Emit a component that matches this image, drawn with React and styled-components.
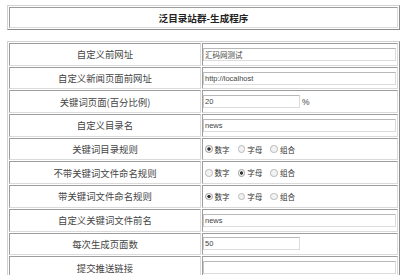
import { Fragment } from 'react';
import styled, { createGlobalStyle } from 'styled-components';

const GlobalStyle = createGlobalStyle`
  html, body {
    margin: 0;
    padding: 0;
    background: #fff;
  }
  body {
    font-family: "Noto Sans CJK SC", "Liberation Sans", sans-serif;
    color: #333;
  }
`;

const Page = styled.div`
  width: 393px;
  padding: 5px 0 0 7px;
`;

const Frame = styled.div`
  box-sizing: border-box;
  width: 393px;
  border: 1px solid;
  border-color: #d2d2d2 #8c8c8c #8c8c8c #d2d2d2;
  padding: 1px;
  display: grid;
  grid-template-columns: ${(p) => p.$cols || '1fr'};
  gap: 1px;
  margin-bottom: ${(p) => p.$mb || 0}px;
`;

const Cell = styled.div`
  box-sizing: border-box;
  height: ${(p) => p.$h}px;
  border: 1px solid;
  border-color: #9c9c9c #dadada #dadada #9c9c9c;
  display: flex;
  align-items: center;
  justify-content: ${(p) => (p.$center ? 'center' : 'flex-start')};
  overflow: hidden;
`;

const Title = styled.span`
  font-size: 9.6px;
  font-weight: bold;
  color: #222;
`;

const Label = styled.span`
  font-size: 9.4px;
  color: #444;
`;

const TextBox = styled.input`
  box-sizing: border-box;
  width: ${(p) => (p.$short ? '97px' : '193px')};
  height: 13px;
  margin: 0;
  padding: 0 1px;
  border: 1px solid;
  border-color: #b8b8b8 #dcdcdc #dcdcdc #c8c8c8;
  font-family: "Liberation Sans", "Noto Sans CJK SC", sans-serif;
  font-size: 7.5px;
  color: #444;
  background: #fff;
  outline: none;
`;

const Suffix = styled.span`
  margin-left: 2px;
  font-family: "Liberation Sans", sans-serif;
  font-size: 8.5px;
  color: #444;
`;

const RadioGroup = styled.div`
  display: flex;
  align-items: center;
  padding-left: 2px;
`;

const Choice = styled.label`
  display: inline-flex;
  align-items: center;
  gap: 2px;
  margin-right: 8px;
  font-size: 7.6px;
  color: #333;
`;

const Radio = styled.input`
  appearance: none;
  box-sizing: border-box;
  width: 7.5px;
  height: 7.5px;
  margin: 0;
  border-radius: 50%;
  border: 1px solid #b8b8b8;
  background: #f2f2f2;
  &:checked {
    background: radial-gradient(circle, #333 0 1.4px, #eee 1.9px);
    border-color: #a0a0a0;
  }
`;

const rows = [
  { label: '自定义前网址', type: 'text', value: '汇码网测试' },
  { label: '自定义新闻页面前网址', type: 'text', value: 'http://localhost' },
  { label: '关键词页面(百分比例)', type: 'short', value: '20', suffix: '%' },
  { label: '自定义目录名', type: 'text', value: 'news' },
  { label: '关键词目录规则', type: 'radio', checked: 0 },
  { label: '不带关键词文件命名规则', type: 'radio', checked: 1 },
  { label: '带关键词文件命名规则', type: 'radio', checked: 0 },
  { label: '自定义关键词文件前名', type: 'text', value: 'news' },
  { label: '每次生成页面数', type: 'short', value: '50' },
  { label: '提交推送链接', type: 'text', value: '' },
];

const options = ['数字', '字母', '组合'];

function Field({ row, index }) {
  if (row.type === 'radio') {
    return (
      <RadioGroup>
        {options.map((o, i) => (
          <Choice key={o}>
            <Radio type="radio" name={'r' + index} defaultChecked={i === row.checked} />
            {o}
          </Choice>
        ))}
      </RadioGroup>
    );
  }
  return (
    <>
      <TextBox $short={row.type === 'short'} defaultValue={row.value} />
      {row.suffix && <Suffix>{row.suffix}</Suffix>}
    </>
  );
}

export default function App() {
  return (
    <>
      <GlobalStyle />
      <Page>
        <Frame $mb={11}>
          <Cell $h={21} $center>
            <Title>泛目录站群-生成程序</Title>
          </Cell>
        </Frame>
        <Frame $cols="192px 1fr">
          {rows.map((row, i) => (
            <Fragment key={i}>
              <Cell $h={22.7} $center>
                <Label>{row.label}</Label>
              </Cell>
              <Cell $h={22.7}>
                <Field row={row} index={i} />
              </Cell>
            </Fragment>
          ))}
        </Frame>
      </Page>
    </>
  );
}
